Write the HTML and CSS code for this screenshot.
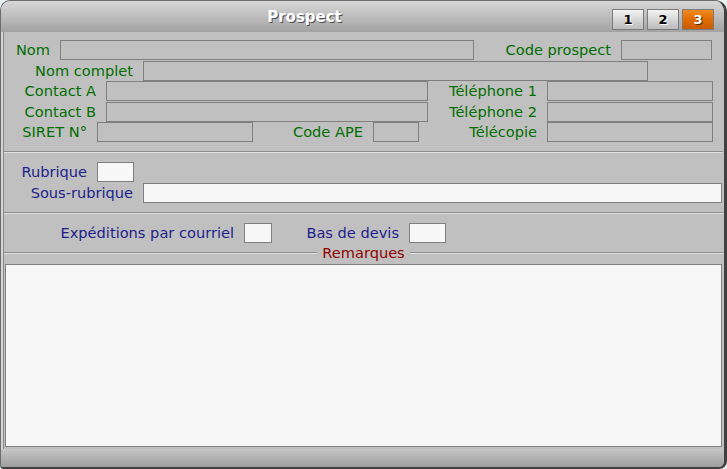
FILE: index.html
```html
<!DOCTYPE html>
<html lang="fr">
<head>
    <meta charset="UTF-8">
    <title>Prospect</title>
    <link rel="stylesheet" href="styles.css">
</head>
<body>
    <div class="window">
        <div class="titlebar">
            <div class="title">Prospect</div>
            <div class="tabs">
                <span class="tab">1</span>
                <span class="tab">2</span>
                <span class="tab active">3</span>
            </div>
        </div>

        <div class="main">
            <div class="group ident">
                <div class="row">
                    <label class="lbl lbl-nom">Nom</label>
                    <span class="field f-nom"></span>
                    <label class="lbl lbl-code">Code prospect</label>
                    <span class="field f-code"></span>
                </div>
                <div class="row">
                    <label class="lbl lbl-long">Nom complet</label>
                    <span class="field f-complet"></span>
                </div>
                <div class="row">
                    <label class="lbl lbl-contact">Contact A</label>
                    <span class="field f-contact"></span>
                    <label class="lbl lbl-tel">Téléphone 1</label>
                    <span class="field f-tel"></span>
                </div>
                <div class="row">
                    <label class="lbl lbl-contact">Contact B</label>
                    <span class="field f-contact"></span>
                    <label class="lbl lbl-tel">Téléphone 2</label>
                    <span class="field f-tel"></span>
                </div>
                <div class="row">
                    <label class="lbl lbl-short">SIRET N°</label>
                    <span class="field f-siret"></span>
                    <label class="lbl lbl-ape">Code APE</label>
                    <span class="field f-ape"></span>
                    <label class="lbl lbl-fax">Télécopie</label>
                    <span class="field f-tel"></span>
                </div>
            </div>

            <div class="separator"></div>

            <div class="group rubriques">
                <div class="row">
                    <label class="lbl blue lbl-short">Rubrique</label>
                    <span class="field edit f-rub"></span>
                </div>
                <div class="row">
                    <label class="lbl blue lbl-long">Sous-rubrique</label>
                    <span class="field edit f-sousrub"></span>
                </div>
            </div>

            <div class="separator"></div>

            <div class="group options">
                <div class="row">
                    <label class="lbl blue lbl-exp">Expéditions par courriel</label>
                    <span class="field edit f-exp"></span>
                    <label class="lbl blue lbl-devis">Bas de devis</label>
                    <span class="field edit f-rub"></span>
                </div>
            </div>

            <div class="legend">
                <span class="legend-line"></span>
                <span class="legend-text">Remarques</span>
                <span class="legend-line"></span>
            </div>
            <div class="notes"></div>
        </div>

        <div class="footer"></div>
    </div>
</body>
</html>
```

FILE: styles.css
```css
html, body {
    margin: 0;
    padding: 0;
    background-color: #e6f2f2;
}

body {
    font-family: 'DejaVu Sans', Verdana, sans-serif;
    font-size: 14.6px;
}

.window {
    width: 727px;
    height: 469px;
    box-sizing: border-box;
    display: flex;
    flex-direction: column;
    background-color: #c0c0c0;
    border: 1px solid #6c6c6c;
    border-right: 3px solid #404040;
    border-bottom: 2px solid #404040;
    border-radius: 10px 12px 8px 4px;
    overflow: hidden;
}

.titlebar {
    height: 31px;
    display: flex;
    background: linear-gradient(#d8d8d8, #a2a2a2);
}

.title {
    flex: 1;
    text-align: center;
    line-height: 33px;
    padding-right: 4px;
    color: #FFFFFF;
    font-weight: bold;
    font-size: 15px;
    text-shadow: 1px 1px 0 #505050;
}

.tabs {
    display: flex;
    gap: 3px;
    margin: 8px 10px 0 0;
}

.tab {
    width: 32px;
    height: 21px;
    box-sizing: border-box;
    border: 1px solid #7c7c7c;
    background: linear-gradient(#f4f4f4, #d4d4d4 55%, #bcbcbc);
    text-align: center;
    line-height: 19px;
    font-size: 13px;
    font-weight: bold;
    color: #000000;
    text-shadow: 1px 1px 0 #ffffff;
}

.tab.active {
    background: linear-gradient(#f08a20, #e06800 55%, #c85c00);
    color: #FFFFFF;
    text-shadow: 1px 1px 0 #503000;
}

.main {
    flex: 1;
    display: flex;
    flex-direction: column;
    padding: 0 1px 0 3px;
    box-shadow: inset 2px 0 0 #d4d4d4, inset 3px 0 0 #8a8a8a;
}

.group {
    display: flex;
    flex-direction: column;
}

.ident {
    margin-top: 8px;
    gap: 0.5px;
}

.rubriques {
    margin-top: 9px;
    gap: 1px;
}

.options {
    margin-top: 9px;
}

.row {
    display: flex;
    align-items: center;
    height: 20px;
}

.lbl {
    box-sizing: border-box;
    padding-right: 10px;
    text-align: right;
    white-space: nowrap;
    line-height: 20px;
    color: #006e00;
}

.lbl.blue {
    color: #1e1e8c;
}

.field {
    height: 20px;
    box-sizing: border-box;
    border: 1px solid #808080;
    background-color: #c0c0c0;
}

.field.edit {
    background-color: #f7f7f7;
}

.separator {
    margin-top: 9px;
    height: 2px;
    box-sizing: border-box;
    border-top: 1px solid #8c8c8c;
    border-bottom: 1px solid #e2e2e2;
}

/* label columns */
.lbl-nom { width: 56px; }
.lbl-code { width: 147px; }
.lbl-long { width: 139px; }
.lbl-contact { width: 102px; }
.lbl-tel { width: 119px; }
.lbl-short { width: 93px; }
.lbl-ape { width: 120px; }
.lbl-fax { width: 128px; }
.lbl-exp { width: 240px; }
.lbl-devis { width: 137px; }

/* field widths */
.f-nom { width: 414px; }
.f-code { width: 91px; }
.f-complet { width: 505px; }
.f-contact { width: 322px; }
.f-tel { width: 166px; }
.f-siret { width: 156px; }
.f-ape { width: 46px; }
.f-rub { width: 37px; }
.f-sousrub { width: 579px; }
.f-exp { width: 28px; }

.legend {
    display: flex;
    align-items: center;
    height: 16px;
    margin-top: 2px;
}

.legend-line {
    flex: 1;
    height: 2px;
    box-sizing: border-box;
    border-top: 1px solid #8c8c8c;
    border-bottom: 1px solid #e2e2e2;
}

.legend-text {
    padding: 0 5px;
    color: #900000;
    line-height: 16px;
}

.notes {
    flex: 1;
    margin: 3px 1px 2px 1px;
    border: 1px solid #808080;
    background-color: #f7f7f7;
}

.footer {
    height: 18px;
    background: linear-gradient(#c6c6c6, #9e9e9e);
}
```
